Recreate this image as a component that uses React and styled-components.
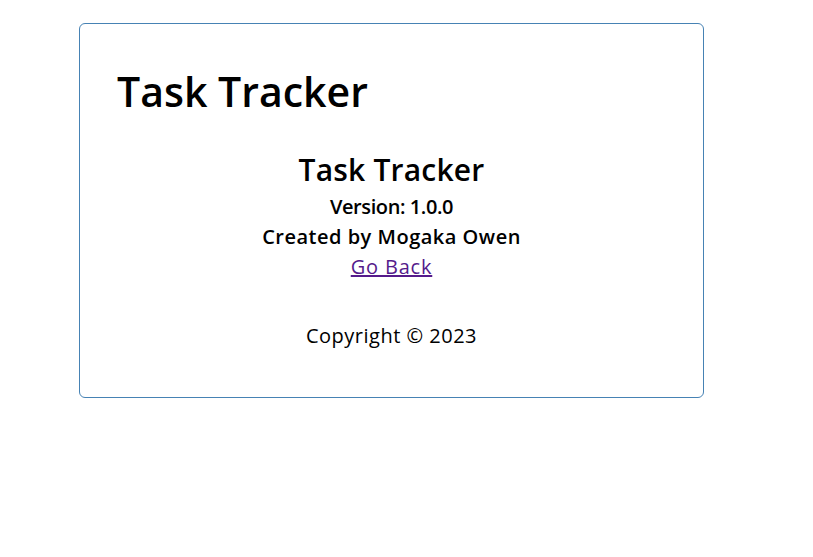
import React from 'react';
import styled, { createGlobalStyle } from 'styled-components';

const GlobalStyle = createGlobalStyle`
  body {
    margin: 0;
    background: #fff;
    font-family: "Open Sans", sans-serif;
    color: #000;
  }
`;

const Container = styled.div`
  box-sizing: border-box;
  width: 625px;
  min-height: 375px;
  margin: 23px 0 0 79px;
  padding: 37px;
  border: 1px solid steelblue;
  border-radius: 6px;
`;

const Header = styled.header`
  display: flex;
  justify-content: space-between;
  align-items: center;
`;

const Title = styled.h1`
  margin: 0;
  font-size: 41px;
  font-weight: 600;
  letter-spacing: 0;
  line-height: 60px;
`;

const About = styled.div`
  text-align: center;
  margin-top: 29px;
`;

const AboutTitle = styled.h2`
  margin: 0 0 2px;
  font-size: 30px;
  font-weight: 600;
  letter-spacing: 0.2px;
  line-height: 40px;
`;

const Line = styled.h4`
  margin: 0;
  font-size: 20px;
  font-weight: 600;
  line-height: 30px;
  letter-spacing: ${(p) => p.$spacing || 0};
`;

const BackLink = styled.a`
  font-size: 20px;
  line-height: 30px;
  letter-spacing: 0.8px;
  color: #551a8b;
`;

const Footer = styled.footer`
  margin-top: 39px;
  text-align: center;
  font-size: 20px;
  line-height: 30px;
  letter-spacing: 0.5px;
`;

export default function App() {
  return (
    <>
      <GlobalStyle />
      <Container>
        <Header>
          <Title>Task Tracker</Title>
        </Header>
        <About>
          <AboutTitle>Task Tracker</AboutTitle>
          <Line $spacing="-0.4px">Version: 1.0.0</Line>
          <Line $spacing="0.5px">Created by Mogaka Owen</Line>
          <BackLink href="#">Go Back</BackLink>
        </About>
        <Footer>Copyright &copy; 2023</Footer>
      </Container>
    </>
  );
}
